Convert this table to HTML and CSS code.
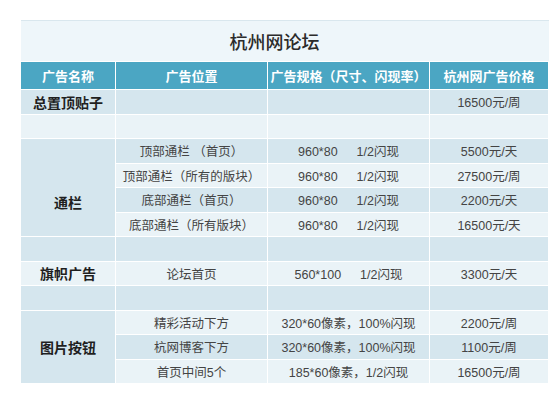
FILE: index.html
```html
<!DOCTYPE html>
<html lang="zh-CN">
<head>
<meta charset="utf-8">
<title>杭州网论坛</title>
<link rel="stylesheet" href="styles.css">
</head>
<body>
<div class="wrap">
<table class="ad-table">
  <colgroup>
    <col class="c1"><col class="c2"><col class="c3"><col class="c4">
  </colgroup>
  <thead>
    <tr class="title-row"><th colspan="4">杭州网论坛</th></tr>
    <tr class="head-row">
      <th>广告名称</th><th>广告位置</th><th>广告规格（尺寸、闪现率）</th><th>杭州网广告价格</th>
    </tr>
  </thead>
  <tbody>
    <tr class="dark"><td class="name">总置顶贴子</td><td></td><td></td><td>16500元/周</td></tr>
    <tr class="light"><td></td><td></td><td></td><td></td></tr>
    <tr class="dark"><td class="name group low" rowspan="4">通栏</td><td>顶部通栏 （首页）</td><td><span class="sz">960*80</span>1/2闪现</td><td>5500元/天</td></tr>
    <tr class="light"><td>顶部通栏（所有的版块）</td><td><span class="sz">960*80</span>1/2闪现</td><td>27500元/周</td></tr>
    <tr class="dark"><td>底部通栏（首页）</td><td><span class="sz">960*80</span>1/2闪现</td><td>2200元/天</td></tr>
    <tr class="light"><td>底部通栏（所有版块）</td><td><span class="sz">960*80</span>1/2闪现</td><td>16500元/天</td></tr>
    <tr class="dark"><td></td><td></td><td></td><td></td></tr>
    <tr class="light"><td class="name">旗帜广告</td><td>论坛首页</td><td><span class="sz">560*100</span>1/2闪现</td><td>3300元/天</td></tr>
    <tr class="dark"><td></td><td></td><td></td><td></td></tr>
    <tr class="light"><td class="name group" rowspan="3">图片按钮</td><td>精彩活动下方</td><td>320*60像素，100%闪现</td><td>2200元/周</td></tr>
    <tr class="dark"><td>杭网博客下方</td><td>320*60像素，100%闪现</td><td>1100元/周</td></tr>
    <tr class="light"><td>首页中间5个</td><td>185*60像素，1/2闪现</td><td>16500元/周</td></tr>
  </tbody>
</table>
</div>
</body>
</html>
```

FILE: styles.css
```css
html, body {
  margin: 0;
  padding: 0;
  background: #ffffff;
}

.wrap {
  padding: 20px 0 0 20px;
}

.ad-table {
  width: 528px;
  table-layout: fixed;
  border-collapse: collapse;
  font-family: "Liberation Sans", "Noto Sans CJK SC", sans-serif;
  font-size: 12.5px;
  color: #444;
}

.c1 { width: 95px; }
.c2 { width: 152px; }
.c3 { width: 162px; }
.c4 { width: 119px; }

.ad-table th,
.ad-table td {
  padding: 0;
  text-align: center;
  vertical-align: middle;
  border: 1px solid #ffffff;
  white-space: nowrap;
  overflow: hidden;
}

.title-row th {
  height: 40px;
  padding-right: 20px;
  background: #eef6fa;
  border: none;
  border-top: 1px solid #d9e7ee;
  font-family: "Noto Sans CJK SC", sans-serif;
  font-size: 18px;
  font-weight: 500;
  color: #2b2b2b;
}

.head-row th {
  height: 27px;
  background: #4ba6c3;
  color: #ffffff;
  font-family: "Noto Sans CJK SC", sans-serif;
  font-size: 13px;
  font-weight: 700;
}

.ad-table tbody tr {
  height: 24.5px;
}

.dark td { background: #d5e6ee; }
.light td { background: #eaf3f7; }

.ad-table td.group { background: #d5e6ee; }

.ad-table td.low { padding-top: 28px; }

.ad-table td.name {
  font-family: "Noto Sans CJK SC", sans-serif;
  font-size: 14px;
  font-weight: 700;
  color: #1f1f1f;
}

.sz {
  display: inline-block;
  margin-right: 19px;
}
```
